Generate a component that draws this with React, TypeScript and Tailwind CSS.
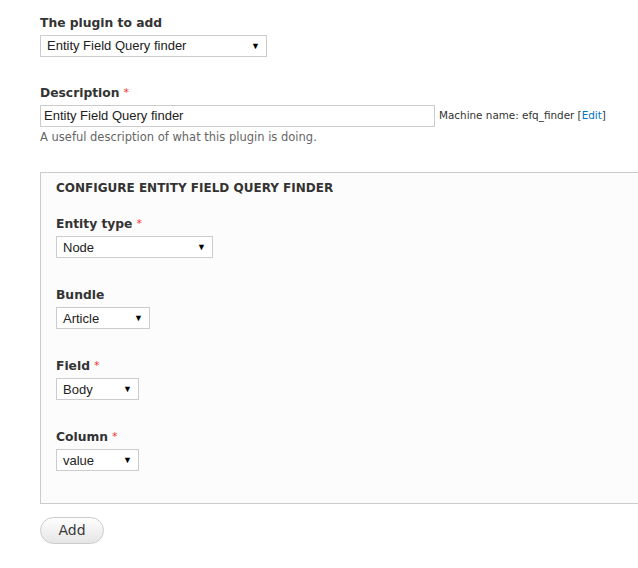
import React from "react";

const font = { fontFamily: '"DejaVu Sans", Verdana, sans-serif' };

function Select({ value, width }: { value: string; width: string }) {
  return (
    <div
      className={`flex h-[22px] items-center justify-between border border-[#ccc] bg-white pl-[6px] pr-[6px] text-[13px] text-[#222] ${width}`}
      style={{ fontFamily: '"Liberation Sans", Arial, sans-serif' }}
    >
      <span>{value}</span>
      <span className="text-[9px] leading-none text-black">▼</span>
    </div>
  );
}

function Label({ text, req }: { text: string; req?: boolean }) {
  return (
    <div className="mb-[4px] flex h-[16px] items-center text-[12.3px] font-bold text-[#333]">
      {text}
      {req && <span className="ml-[4px] text-[11px] font-normal text-[#e33]">*</span>}
    </div>
  );
}

export default function App() {
  return (
    <div className="min-h-[568px] w-[638px] overflow-hidden bg-white pt-[15px]" style={font}>
      <div className="pl-[40px]">
        <Label text="The plugin to add" />
        <Select value="Entity Field Query finder" width="w-[227px]" />

        <div className="mt-[28px]">
          <Label text="Description" req />
          <div className="flex items-center">
            <div
              className="flex h-[22px] w-[395px] items-center border border-[#ccc] bg-white pl-[3px] text-[13px] text-[#222]"
              style={{ fontFamily: '"Liberation Sans", Arial, sans-serif' }}
            >
              Entity Field Query finder
            </div>
            <span className="ml-[4px] text-[10.4px] text-[#333]">
              Machine name: efq_finder [<span className="text-[#0074bd]">Edit</span>]
            </span>
          </div>
          <div className="mt-[2px] text-[11.5px] text-[#666]">
            A useful description of what this plugin is doing.
          </div>
        </div>

        <div className="mt-[26px] mr-[-10px] border border-[#ccc] bg-[#fcfcfc] pb-[32px] pl-[15px] pt-[6px]">
          <div className="h-[16px] text-[12px] font-bold text-[#333]">
            CONFIGURE ENTITY FIELD QUERY FINDER
          </div>
          <div className="mt-[21px]">
            <Label text="Entity type" req />
            <Select value="Node" width="w-[157px]" />
          </div>
          <div className="mt-[29px]">
            <Label text="Bundle" />
            <Select value="Article" width="w-[94px]" />
          </div>
          <div className="mt-[29px]">
            <Label text="Field" req />
            <Select value="Body" width="w-[83px]" />
          </div>
          <div className="mt-[29px]">
            <Label text="Column" req />
            <Select value="value" width="w-[83px]" />
          </div>
        </div>

        <button className="mt-[13px] h-[27px] w-[64px] rounded-full border border-[#ccc] bg-gradient-to-b from-[#fefefe] to-[#e6e6e6] text-[14px] text-[#3a3a3a]">
          Add
        </button>
      </div>
    </div>
  );
}
